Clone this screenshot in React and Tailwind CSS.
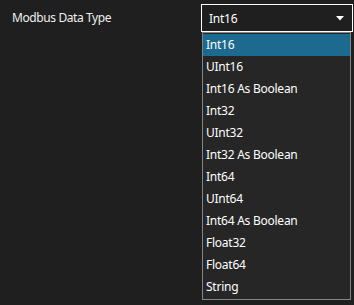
import React from 'react';

// Modbus data type picker, drop-down opened over the form.
const TYPES = [
  'Int16',
  'UInt16',
  'Int16 As Boolean',
  'Int32',
  'UInt32',
  'Int32 As Boolean',
  'Int64',
  'UInt64',
  'Int64 As Boolean',
  'Float32',
  'Float64',
  'String',
];

export default function App() {
  const selected = 'Int16';

  return (
    <div
      className="relative w-[354px] h-[305px] bg-[#1f1f1f] text-white text-[12px] tracking-[-0.25px] overflow-hidden"
      style={{ fontFamily: '"Noto Sans", "Open Sans", sans-serif' }}
    >
      {/* Form row */}
      <div className="flex items-center pt-[4px] pl-[12px]">
        <span className="w-[189px] text-[#f0f0f0] tracking-[-0.4px]">Modbus Data Type</span>
        <div className="flex items-center justify-between w-[152px] h-[28px] border border-white pl-[7px] pr-[7px]">
          <span className="pt-[1px]">{selected}</span>
          <svg width="8" height="5" viewBox="0 0 8 5" className="mr-[1px]">
            <path d="M0 0 H8 L4 4.5 Z" fill="#ffffff" />
          </svg>
        </div>
      </div>

      {/* Open drop-down list */}
      <div className="absolute left-[202px] top-[32px] w-[149px] h-[268px] border border-[#858585] bg-[#262626] pt-[1px]">
        {TYPES.map((t) => (
          <div
            key={t}
            className={`h-[22px] flex items-center pl-[3px] ${
              t === selected ? 'bg-[#1c6a8f]' : ''
            }`}
          >
            {t}
          </div>
        ))}
      </div>
    </div>
  );
}
